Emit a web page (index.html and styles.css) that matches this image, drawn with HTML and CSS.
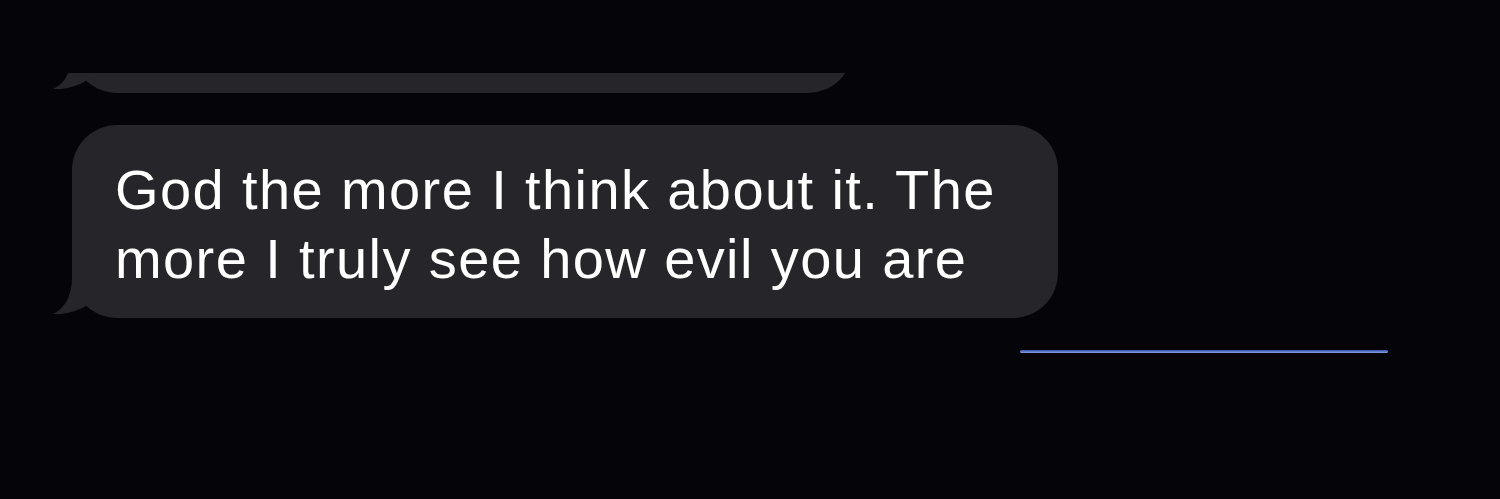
FILE: index.html
```html
<html>
<head>
    <title>Messages</title>
    <link rel="stylesheet" href="styles.css">
</head>
<body>
    <div class="thread">
        <!-- Previous message, scrolled mostly out of view -->
        <div class="peek">
            <div class="bubble received short">
                <svg class="tail" viewBox="0 0 60 60" width="60" height="60">
                    <path d="M24,0 L24,20 C24,40 16,52 5,57 C18,58 34,53 44,45 L44,0 Z"/>
                </svg>
            </div>
        </div>

        <div class="bubble received">
            <p>God the more I think about it. The more I truly see how evil you are</p>
            <svg class="tail" viewBox="0 0 60 60" width="60" height="60">
                <path d="M24,0 L24,20 C24,40 16,52 5,57 C18,58 34,53 44,45 L44,0 Z"/>
            </svg>
        </div>

        <!-- Top edge of the next sent message -->
        <div class="sent-edge"></div>
    </div>
</body>
</html>
```

FILE: styles.css
```css
body, p {
    margin: 0;
    padding: 0;
}

body {
    background-color: #050409;
    font-family: 'Liberation Sans', Arial, sans-serif;
    color: #fff;
    min-height: 100vh;
    overflow: hidden;
}

.thread {
    display: flex;
    flex-direction: column;
    padding-top: 73px;
}

.peek {
    height: 20px;
    overflow: hidden;
    display: flex;
    align-items: flex-end;
    padding-left: 72px;
}

.bubble {
    position: relative;
    box-sizing: border-box;
    background-color: #262529;
    border-radius: 45px;
}

.bubble.received {
    margin-left: 72px;
    width: 986px;
    padding: 30px 30px 25px 43px;
    margin-top: 32px;
}

.peek .bubble.short {
    margin: 0;
    width: 781px;
    height: 90px;
    padding: 0;
}

.bubble p {
    font-size: 56px;
    line-height: 69px;
    letter-spacing: 1.4px;
}

.tail {
    position: absolute;
    left: -24px;
    bottom: 1px;
}

.tail path {
    fill: #262529;
}

.sent-edge {
    margin: 32px 0 0 1020px;
    width: 368px;
    height: 3px;
    border-radius: 2px;
    background: linear-gradient(#2f4fa8, #8ea4e2);
}
```
